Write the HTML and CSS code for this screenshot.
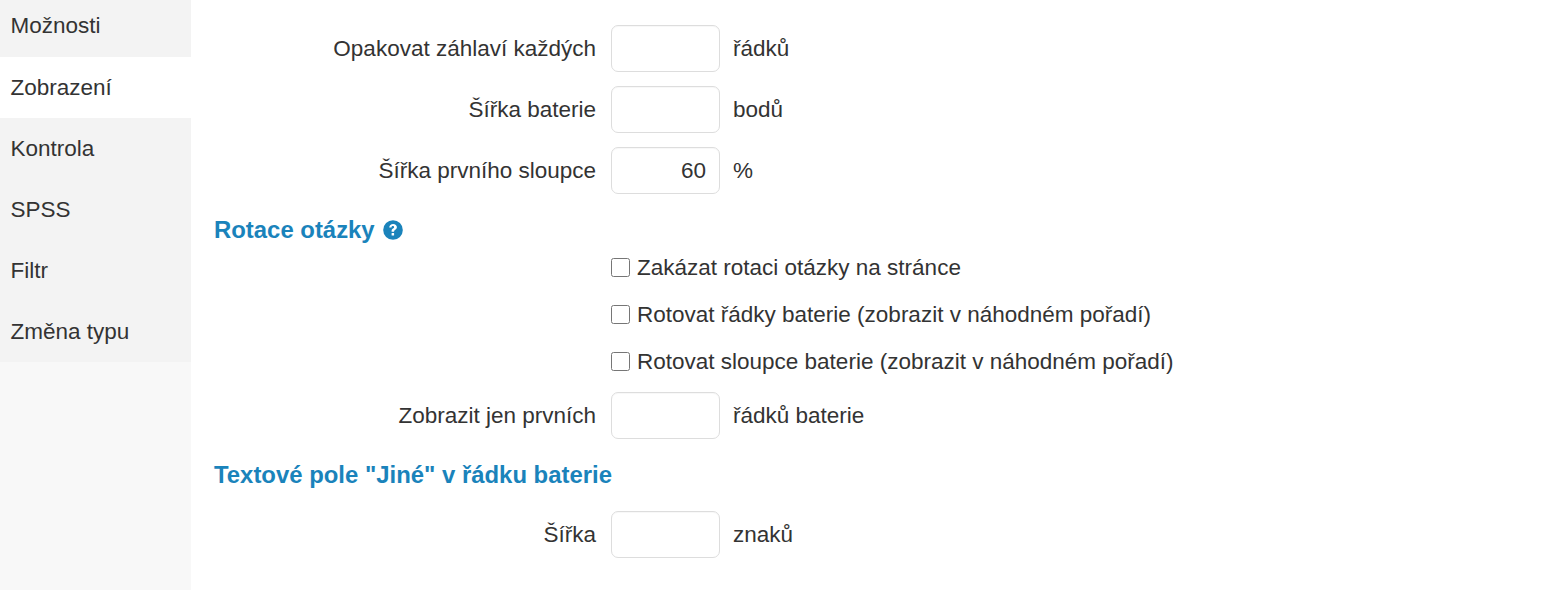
FILE: index.html
```html
<!DOCTYPE html>
<html lang="cs">
<head>
  <meta charset="UTF-8" />
  <title>Zobrazení</title>
  <link rel="stylesheet" href="styles.css">
</head>
<body>
  <div class="layout">
    <aside class="sidebar">
      <ul class="tabs">
        <li class="first"><a href="#">Možnosti</a></li>
        <li class="active"><a href="#">Zobrazení</a></li>
        <li><a href="#">Kontrola</a></li>
        <li><a href="#">SPSS</a></li>
        <li><a href="#">Filtr</a></li>
        <li><a href="#">Změna typu</a></li>
      </ul>
    </aside>

    <main class="content">
      <div class="form-row">
        <label class="row-label">Opakovat záhlaví každých</label>
        <input class="num-input" type="text">
        <span class="unit">řádků</span>
      </div>
      <div class="form-row">
        <label class="row-label">Šířka baterie</label>
        <input class="num-input" type="text">
        <span class="unit">bodů</span>
      </div>
      <div class="form-row">
        <label class="row-label">Šířka prvního sloupce</label>
        <input class="num-input" type="text" value="60">
        <span class="unit">%</span>
      </div>

      <h3 class="section-title rotation-title">Rotace otázky
        <svg class="help-icon" viewBox="0 0 20 20" aria-hidden="true">
          <circle cx="10" cy="10" r="9.8" fill="#1a83bb"/>
          <path d="M6.2 7.400c.2-2.200 1.800-3.500 3.900-3.500 2.200 0 3.800 1.300 3.800 3.200 0 1.400-.8 2.100-1.800 2.800-.8.500-1 .8-1 1.400v.4H8.600v-.6c0-1.200.4-1.800 1.400-2.500.8-.5 1.100-.9 1.100-1.400 0-.7-.5-1.100-1.200-1.100-.8 0-1.300.5-1.400 1.400z" fill="#fff"/>
          <rect x="8.600" y="12.900" width="2.500" height="2.700" rx=".3" fill="#fff"/>
        </svg>
      </h3>

      <div class="check-list">
        <label class="check-row"><input type="checkbox"> Zakázat rotaci otázky na stránce</label>
        <label class="check-row"><input type="checkbox"> Rotovat řádky baterie (zobrazit v náhodném pořadí)</label>
        <label class="check-row"><input type="checkbox"> Rotovat sloupce baterie (zobrazit v náhodném pořadí)</label>
      </div>

      <div class="form-row">
        <label class="row-label">Zobrazit jen prvních</label>
        <input class="num-input" type="text">
        <span class="unit">řádků baterie</span>
      </div>

      <h3 class="section-title other-title">Textové pole "Jiné" v řádku baterie</h3>

      <div class="form-row">
        <label class="row-label">Šířka</label>
        <input class="num-input" type="text">
        <span class="unit">znaků</span>
      </div>
    </main>
  </div>
</body>
</html>
```

FILE: styles.css
```css
html, body {
  margin: 0;
  height: 100%;
  overflow: hidden;
}
body {
  font-family: "Liberation Sans", Arial, sans-serif;
  font-size: 22.5px;
  color: #333;
  background: #fff;
}
.layout {
  display: flex;
  height: 590px;
}
.sidebar {
  width: 191px;
  flex: none;
  background: #f8f8f8;
}
.tabs {
  list-style: none;
  margin: 0;
  padding: 0;
}
.tabs li {
  height: 61px;
  background: #f3f3f3;
}
.tabs li.first {
  height: 57px;
}
.tabs li.active {
  background: #fff;
}
.tabs a {
  display: flex;
  align-items: center;
  height: 100%;
  padding-left: 10.5px;
  color: #333;
  text-decoration: none;
}
.tabs li.first a {
  padding-bottom: 5px;
  box-sizing: border-box;
}
.content {
  flex: 1;
  padding: 25px 0 0 23px;
}
.form-row {
  display: flex;
  align-items: center;
  height: 47px;
  margin-bottom: 14px;
}
.row-label {
  width: 382px;
  text-align: right;
  flex: none;
}
.num-input {
  width: 109px;
  height: 47px;
  box-sizing: border-box;
  margin-left: 15px;
  padding: 0 13px;
  border: 1px solid #ddd;
  border-radius: 7px;
  font: inherit;
  color: #333;
  text-align: right;
  box-shadow: inset 0 1px 1px rgba(0,0,0,0.03);
}
.unit {
  margin-left: 13px;
}
.section-title {
  margin: 0;
  font-size: 23.9px;
  font-weight: bold;
  color: #1a83bb;
  line-height: 26px;
}
.rotation-title {
  margin-top: 23px;
  display: flex;
  align-items: center;
  gap: 8px;
}
.other-title {
  margin-top: 23px;
  margin-bottom: 23px;
}
.help-icon {
  width: 20px;
  height: 20px;
}
.check-list {
  margin: 1px 0 7px 397px;
}
.check-row {
  display: flex;
  align-items: center;
  height: 47px;
  gap: 7px;
}
.check-row input {
  width: 19px;
  height: 19px;
  margin: 0;
}
```
